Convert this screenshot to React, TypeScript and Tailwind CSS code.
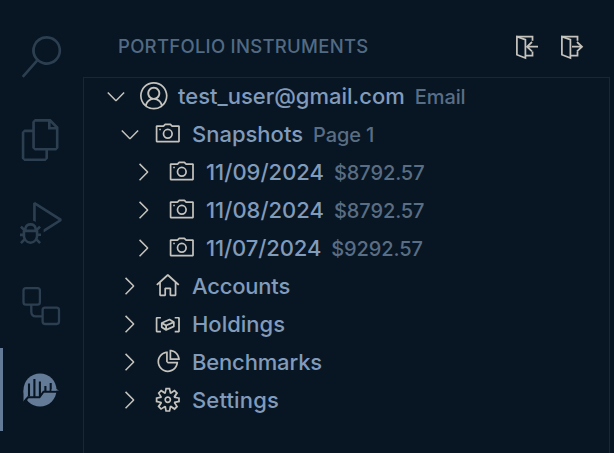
import React from "react";
import {
  VscSearch, VscFiles, VscDebugAlt, VscAccount, VscDeviceCamera, VscHome,
  VscSymbolVariable, VscPieChart, VscGear, VscChevronRight, VscChevronDown,
} from "react-icons/vsc";

type IconType = React.ComponentType<{ className?: string }>;

function Workflow() {
  return (
    <svg viewBox="0 0 42 42" className="size-[42px]" fill="none" stroke="currentColor" strokeWidth="2.3">
      <rect x="3.5" y="3.2" width="16.4" height="16.4" rx="2.4" />
      <rect x="22.6" y="22.6" width="16.4" height="16.4" rx="2.4" />
      <path d="M11.3 19.5v7.2q0 4.6 4.6 4.6h6.7" />
    </svg>
  );
}

function Logo() {
  return (
    <svg viewBox="0 0 42 42" className="size-[42px]">
      <circle cx="20" cy="21" r="16.5" fill="#637b96" />
      <path d="M3.500 21v11.500l4-5z" fill="#637b96" />
      <path d="M4.500 32.500 8 28.300h11.500l4-5.600h16" stroke="#081523" strokeWidth="2" fill="none" />
      <path d="M9 14.500v13M14.400 10v18M19.900 12.500v15M25.400 17v5M30.700 14v8" stroke="#081523" strokeWidth="2.100" fill="none" />
      <path d="m33 18.200 6 3.200h-8z" fill="#637b96" />
    </svg>
  );
}

function Door({ out = false }: { out?: boolean }) {
  return (
    <svg viewBox="0 0 28 28" className="size-7" fill="none" stroke="currentColor" strokeWidth="1.75">
      <path d="M3.900 3.700 12.400 6.700v18.300L3.900 21.700z" />
      <path d="M3.900 3.700H19.500v4M12.400 22.700h7.100v-4.200" />
      {out ? <path d="M14 13.700h10.500M19 9l5 4.700-5 4.700" /> : <path d="M25 13.700H14.500M19 9l-5 4.700 5 4.700" />}
    </svg>
  );
}

function Row({ icon: Icon, label, detail, level = 1, open = false, track = "tracking-normal" }: {
  icon: IconType; label: string; detail?: string; level?: number; open?: boolean; track?: string;
}) {
  const pad = ["pl-[18px]", "pl-8", "pl-[46px]"][level];
  return (
    <div className={`flex h-[38px] items-center gap-[10px] ${pad}`}>
      {open
        ? <VscChevronDown className="size-7 shrink-0 text-[#c5c3bd]" />
        : <VscChevronRight className="mr-px -ml-px size-7 shrink-0 text-[#c5c3bd]" />}
      <Icon className="size-[27.6px] shrink-0 text-[#c5c3bd]" />
      <div className="flex items-baseline gap-[10px] pl-[0.4px] whitespace-nowrap">
        <span className={`text-[22px] leading-[38px] font-[450] text-[#819bbb] ${track}`}>{label}</span>
        {detail && <span className="text-[20px] font-[450] tracking-[-0.1px] text-[#596e85]">{detail}</span>}
      </div>
    </div>
  );
}

export default function App() {
  return (
    <div className="flex h-[453px] w-[614px] overflow-hidden bg-[#081523] font-['Inter',sans-serif]">
      <nav className="flex w-[83px] flex-col pt-[15px] text-[#2c3f50]">
        <div className="flex h-[83px] items-center justify-center pr-px"><VscSearch className="size-[42px]" /></div>
        <div className="flex h-[83px] items-center justify-center pr-px"><VscFiles className="size-[42px]" /></div>
        <div className="flex h-[83px] items-center justify-center pr-px"><VscDebugAlt className="size-[42px]" /></div>
        <div className="flex h-[83px] items-center justify-center pr-px"><Workflow /></div>
        <div className="mt-px flex h-[83px] items-center justify-center border-l-[3px] border-[#637b96] pr-[5px]"><Logo /></div>
      </nav>
      <main className="flex w-[527px] flex-col">
        <header className="flex h-[77px] items-center justify-between pt-4 pr-6 pl-[35px]">
          <h1 className="text-[18.5px] font-[450] tracking-[0.28px] whitespace-nowrap text-[#526b84]">PORTFOLIO INSTRUMENTS</h1>
          <div className="flex gap-[17px] text-[#c5c3bd]"><Door /><Door out /></div>
        </header>
        <section className="flex-1 border border-b-0 border-[#192734]">
          <div className="-mt-px">
            <Row icon={VscAccount} label="test_user@gmail.com" detail="Email" level={0} open />
            <Row icon={VscDeviceCamera} label="Snapshots" detail="Page 1" open />
            <Row icon={VscDeviceCamera} label="11/09/2024" detail="$8792.57" level={2} />
            <Row icon={VscDeviceCamera} label="11/08/2024" detail="$8792.57" level={2} />
            <Row icon={VscDeviceCamera} label="11/07/2024" detail="$9292.57" level={2} track="tracking-[-0.1px]" />
            <Row icon={VscHome} label="Accounts" track="tracking-[-0.2px]" />
            <Row icon={VscSymbolVariable} label="Holdings" />
            <Row icon={VscPieChart} label="Benchmarks" track="tracking-[-0.16px]" />
            <Row icon={VscGear} label="Settings" track="tracking-[0.15px]" />
          </div>
        </section>
      </main>
    </div>
  );
}
